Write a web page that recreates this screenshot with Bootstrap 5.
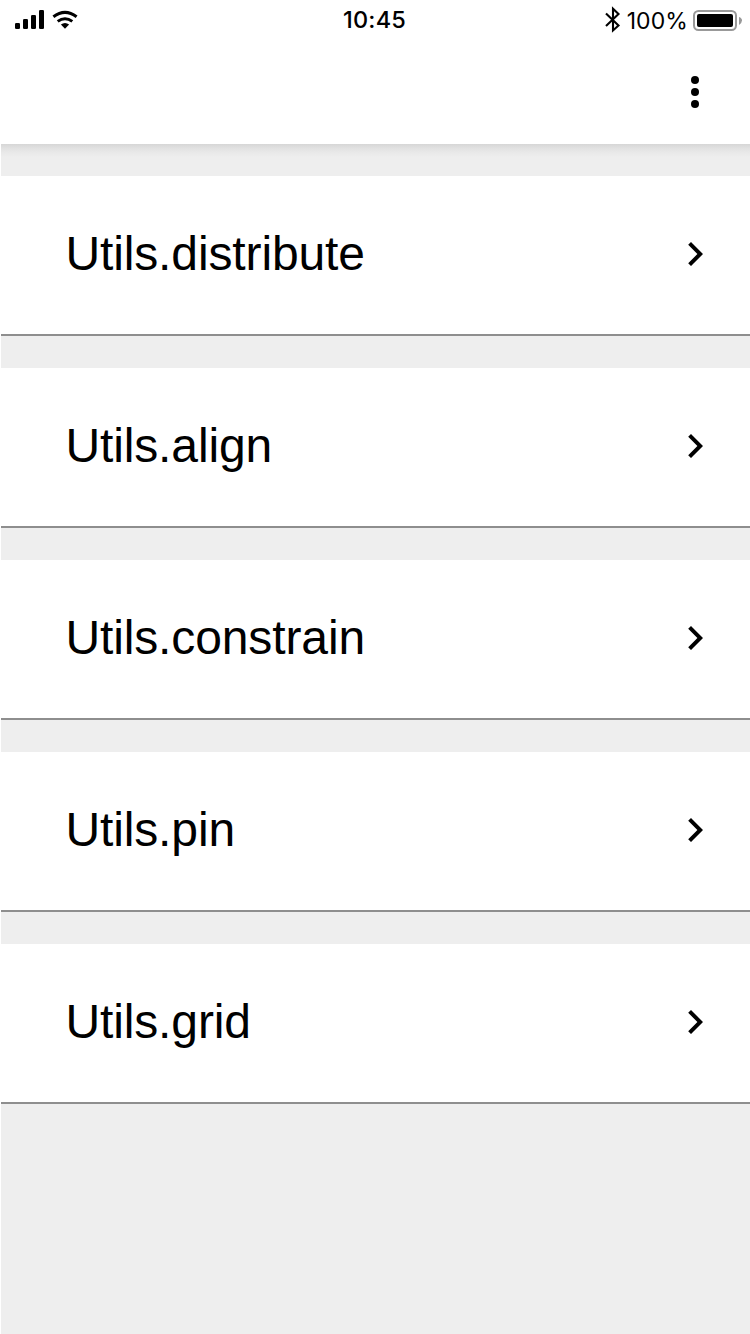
<!DOCTYPE html>
<html lang="en">
<head>
<meta charset="utf-8">
<meta name="viewport" content="width=device-width, initial-scale=1">
<title>Utils</title>
<link href="https://cdn.jsdelivr.net/npm/bootstrap@5.3.0/dist/css/bootstrap.min.css" rel="stylesheet">
<style>
  body { font-family: "Liberation Sans", Arial, sans-serif; color: #000; background: #fff; }
  .screen { height: 1334px; padding-left: 1px; }
  .status { height: 40px; font-family: Inter, sans-serif; font-size: 24px; line-height: 40px; }
  .status svg, .topbar svg, .item svg { display: block; flex: none; }
  .clock { font-weight: 500; font-size: 23.5px; letter-spacing: .2px; padding-right: 2px; }
  .battery-text { font-size: 23px; line-height: 42px; letter-spacing: .1px; margin-right: -1px; }
  .topbar { height: 104px; padding-right: 31px; }
  .content-area { background: #eee; padding-top: 32px; gap: 32px; }
  .content-area::before { content: ""; position: absolute; top: 0; left: 0; right: 0; height: 13px;
    background: linear-gradient(#d6d6d6, #e0e0e0 30%, #e8e8e8 60%, #eee); }
  .item { height: 160px; padding: 0 31px 2px 64.4px; border: 0; border-bottom: 2px solid #8e8e8e; background: #fff; color: #000; font-size: 48px; line-height: 56px; letter-spacing: -.12px; text-decoration: none; }
</style>
</head>
<body>
<div class="screen d-flex flex-column overflow-hidden">
  <div class="status row g-0">
    <div class="col d-flex">
      <svg width="90" height="40" viewBox="1 0 90 40">
        <rect x="15" y="23" width="5" height="6" rx="1.3"/>
        <rect x="23" y="19" width="5" height="10" rx="1.3"/>
        <rect x="31" y="15" width="5" height="14" rx="1.3"/>
        <rect x="39" y="10" width="5" height="19" rx="1.3"/>
        <path d="M53.400 16.800Q65 8 76.600 16.800M57.700 21.400Q65 16 72.300 21.400" fill="none" stroke="#000" stroke-width="3"/>
        <path d="M60.900 24.600Q65 21.200 69.100 24.600L65 28.800z"/>
      </svg>
    </div>
    <div class="col-auto clock">10:45</div>
    <div class="col d-flex justify-content-end">
      <svg width="22" height="40" viewBox="605 0 22 40"><path d="M606 13.500L618.500 25.500 613 30.500V8.700L618.500 14 606 26" fill="none" stroke="#000" stroke-width="2.100"/></svg>
      <span class="battery-text">100%</span>
      <svg class="ms-1" width="59" height="40" viewBox="691 0 59 40">
        <rect x="694" y="11" width="42" height="19" rx="4.500" fill="none" stroke="#999" stroke-width="2"/>
        <rect x="697" y="14" width="36" height="13" rx="2"/>
        <path d="M739 17Q742 18 742 20.500T739 25z" fill="#999"/>
      </svg>
    </div>
  </div>
  <header class="topbar d-flex justify-content-end align-items-center">
    <svg width="48" height="48" viewBox="0 0 48 48" role="button" aria-label="Menu"><circle cx="24" cy="12" r="4"/><circle cx="24" cy="24" r="4"/><circle cx="24" cy="36" r="4"/></svg>
  </header>
  <main class="content-area position-relative flex-grow-1 d-flex flex-column">
    <a href="#" class="item d-flex align-items-center justify-content-between">Utils.distribute<svg width="48" height="48" viewBox="0 0 48 48"><path d="M17.200 14.800L20 12 32 24 20 36 17.200 33.200 26.400 24z"/></svg></a>
    <a href="#" class="item d-flex align-items-center justify-content-between">Utils.align<svg width="48" height="48" viewBox="0 0 48 48"><path d="M17.200 14.800L20 12 32 24 20 36 17.200 33.200 26.400 24z"/></svg></a>
    <a href="#" class="item d-flex align-items-center justify-content-between">Utils.constrain<svg width="48" height="48" viewBox="0 0 48 48"><path d="M17.200 14.800L20 12 32 24 20 36 17.200 33.200 26.400 24z"/></svg></a>
    <a href="#" class="item d-flex align-items-center justify-content-between">Utils.pin<svg width="48" height="48" viewBox="0 0 48 48"><path d="M17.200 14.800L20 12 32 24 20 36 17.200 33.200 26.400 24z"/></svg></a>
    <a href="#" class="item d-flex align-items-center justify-content-between">Utils.grid<svg width="48" height="48" viewBox="0 0 48 48"><path d="M17.200 14.800L20 12 32 24 20 36 17.200 33.200 26.400 24z"/></svg></a>
  </main>
</div>
<script src="https://cdn.jsdelivr.net/npm/bootstrap@5.3.0/dist/js/bootstrap.bundle.min.js"></script>
</body>
</html>
